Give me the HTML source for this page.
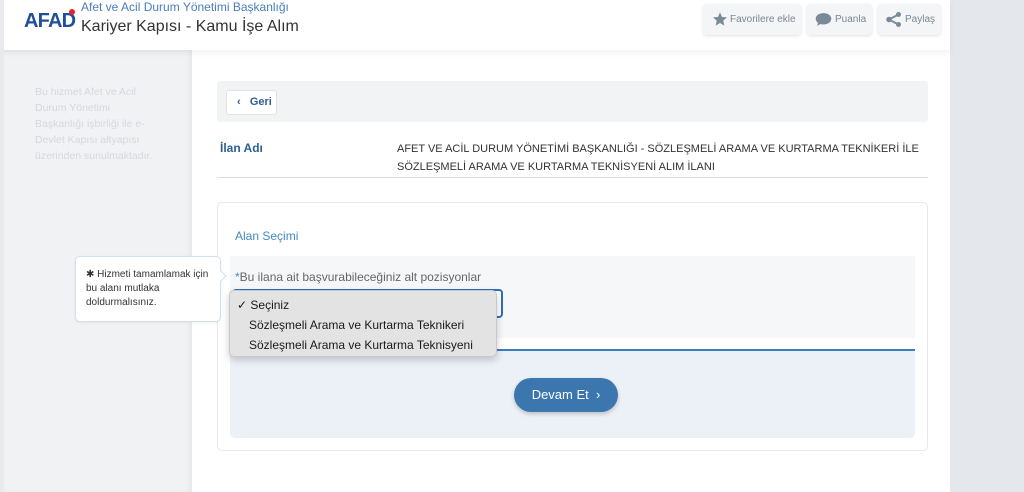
<!DOCTYPE html>
<html><head><meta charset="utf-8"><style>
*{margin:0;padding:0;box-sizing:border-box}
body{width:1024px;height:492px;overflow:hidden;background:#e4e7eb;font-family:"Liberation Sans",sans-serif;position:relative}
.a{position:absolute}
</style></head><body>
<div class="a" style="left:0;top:0;width:950px;height:492px;background:#fff"></div>
<div class="a" style="left:0;top:50px;width:192px;height:442px;background:#f1f2f4;box-shadow:inset -3px 0 4px rgba(0,0,0,.04)"></div>
<div class="a" style="left:0;top:0;width:950px;height:50px;background:#fff;box-shadow:0 3px 6px rgba(0,0,0,.06)"></div>
<div class="a" style="left:0;top:0;width:4px;height:492px;background:#e8eaed"></div>
<div class="a" style="left:24px;top:10px;font-weight:bold;font-size:20px;color:#1f4e9a;letter-spacing:-0.8px">AFAD</div>
<div class="a" style="left:69px;top:9px;width:6px;height:6px;border-radius:50%;background:#e3262e"></div>
<div class="a" style="left:81px;top:0px;font-size:12px;color:#4a7dbf">Afet ve Acil Durum Yönetimi Başkanlığı</div>
<div class="a" style="left:81px;top:18px;font-size:16px;color:#333">Kariyer Kapısı - Kamu İşe Alım</div>
<div class="a" style="left:703px;top:4px;width:98px;height:31px;background:#f4f5f7;border-radius:4px;box-shadow:0 1px 3px rgba(0,0,0,.12);font-size:10px;color:#7b8794;line-height:31px;padding-left:27px">Favorilere ekle</div>
<svg class="a" style="left:712px;top:11px" width="16" height="16" viewBox="0 0 24 24"><path fill="#7b8a99" d="M12 2l3 7 7.5.6-5.7 5 1.8 7.4L12 18l-6.6 4 1.8-7.4-5.7-5L9 9z"/></svg>
<div class="a" style="left:807px;top:4px;width:65px;height:31px;background:#f4f5f7;border-radius:4px;box-shadow:0 1px 3px rgba(0,0,0,.12);font-size:10px;color:#7b8794;line-height:31px;padding-left:28px">Puanla</div>
<svg class="a" style="left:815px;top:12px" width="17" height="15" viewBox="0 0 24 20"><path fill="#7b8a99" d="M12 1C5.5 1 1 4.6 1 9c0 2.300 1.2 4.3 3.2 5.7L3 19l4.8-2.7c1.3.4 2.7.7 4.2.7 6.5 0 11-3.6 11-8s-4.5-8-11-8z"/></svg>
<div class="a" style="left:878px;top:4px;width:63px;height:31px;background:#f4f5f7;border-radius:4px;box-shadow:0 1px 3px rgba(0,0,0,.12);font-size:10px;color:#7b8794;line-height:31px;padding-left:27px">Paylaş</div>
<svg class="a" style="left:886px;top:12px" width="16" height="15" viewBox="0 0 16 15"><circle cx="12.5" cy="2.5" r="2.5" fill="#7b8a99"/><circle cx="3" cy="7.5" r="2.8" fill="#7b8a99"/><circle cx="12.5" cy="12.5" r="2.5" fill="#7b8a99"/><path d="M12.5 2.5L3 7.5l9.5 5" stroke="#7b8a99" stroke-width="2" fill="none"/></svg>
<div class="a" style="left:35px;top:84px;width:118px;font-size:10.5px;line-height:16px;color:#d4d7dc">Bu hizmet Afet ve Acil Durum Yönetimi Başkanlığı işbirliği ile e-Devlet Kapısı altyapısı üzerinden sunulmaktadır.</div>
<div class="a" style="left:217px;top:81px;width:711px;height:41px;background:#f2f3f5;border-radius:3px"></div>
<div class="a" style="left:226px;top:90px;width:51px;height:25px;background:#fff;border:1px solid #dfe2e6;border-radius:3px;font-size:11px;font-weight:bold;color:#2d5f95;line-height:23px;padding-left:10px">‹&nbsp;&nbsp;&nbsp;Geri</div>
<div class="a" style="left:220px;top:141px;font-size:12px;color:#2d5f95;font-weight:bold">İlan Adı</div>
<div class="a" style="left:397px;top:140px;width:530px;font-size:11px;line-height:18px;color:#333">AFET VE ACİL DURUM YÖNETİMİ BAŞKANLIĞI - SÖZLEŞMELİ ARAMA VE KURTARMA TEKNİKERİ İLE SÖZLEŞMELİ ARAMA VE KURTARMA TEKNİSYENİ ALIM İLANI</div>
<div class="a" style="left:217px;top:177px;width:711px;height:1px;background:#d8dbe0"></div>
<div class="a" style="left:217px;top:202px;width:711px;height:249px;border:1px solid #e6e8eb;border-radius:5px;background:#fff"></div>
<div class="a" style="left:235px;top:229px;font-size:12px;color:#3f8bc4">Alan Seçimi</div>
<div class="a" style="left:230px;top:256px;width:685px;height:82px;background:#f6f7f9"></div>
<div class="a" style="left:235px;top:270px;font-size:12px;color:#666"><span style="color:#3f8bc4">*</span>Bu ilana ait başvurabileceğiniz alt pozisyonlar</div>
<div class="a" style="left:232px;top:289px;width:271px;height:29px;border:2px solid #2b6fc0;border-radius:4px;background:#fff"></div>
<div class="a" style="left:230px;top:349px;width:685px;height:89px;background:#ecf0f7;border-top:2px solid #3d7cc0;border-radius:0 0 5px 5px"></div>
<div class="a" style="left:514px;top:378px;width:104px;height:34px;border-radius:17px;background:#3b76ae;box-shadow:0 2px 4px rgba(0,0,0,.2);color:#fff;font-size:13px;line-height:34px;text-align:center">Devam Et &nbsp;›</div>
<div class="a" style="left:229px;top:290px;width:268px;height:67px;background:#e3e3e3;border:1px solid #c9c9c9;border-radius:5px;box-shadow:0 3px 8px rgba(0,0,0,.2);font-size:12px;color:#1a1a1a;line-height:20px;padding-top:4px">
<div style="padding-left:7px">✓ Seçiniz</div>
<div style="padding-left:19px">Sözleşmeli Arama ve Kurtarma Teknikeri</div>
<div style="padding-left:19px">Sözleşmeli Arama ve Kurtarma Teknisyeni</div></div>
<div class="a" style="left:75px;top:256px;width:146px;height:66px;background:#fff;border:1px solid #cfe0ef;border-radius:5px;font-size:10px;line-height:14px;color:#333;padding:11px 0 0 10px;box-shadow:0 1px 3px rgba(0,0,0,.06)">✱ Hizmeti tamamlamak için bu alanı mutlaka doldurmalısınız.</div>
<div class="a" style="left:217px;top:272px;width:8px;height:8px;background:#fff;border-top:1px solid #cfe0ef;border-right:1px solid #cfe0ef;transform:rotate(45deg)"></div>
</body></html>
